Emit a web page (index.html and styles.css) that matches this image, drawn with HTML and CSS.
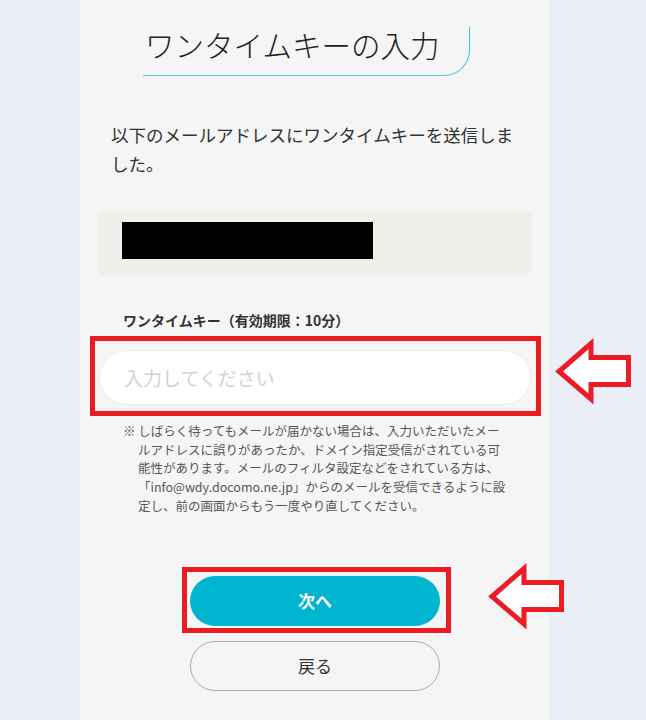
FILE: index.html
```html
<!DOCTYPE html>
<html lang="ja">
<head>
    <meta charset="UTF-8">
    <meta name="viewport" content="width=device-width, initial-scale=1.0">
    <title>ワンタイムキーの入力</title>
    <link rel="stylesheet" href="styles.css">
</head>
<body>
    <main class="panel">
        <!-- Titre -->
        <h1 class="title">ワンタイムキーの入力</h1>

        <p class="lead">以下のメールアドレスにワンタイムキーを送信しました。</p>

        <!-- Adresse masquée -->
        <div class="mail-box"><span class="mask"></span></div>

        <label class="key-label" for="key">ワンタイムキー（有効期限：10分）</label>
        <div class="field-wrap mark">
            <input type="text" id="key" class="key-input" placeholder="入力してください">
            <svg class="arrow arrow-field" width="80" height="66" viewBox="0 0 80 66">
                <polygon points="6,33.5 38,5.5 38,19.5 75.5,19.5 75.5,46.5 38,46.5 38,61" />
            </svg>
        </div>

        <p class="note">※ しばらく待ってもメールが届かない場合は、入力いただいたメールアドレスに誤りがあったか、ドメイン指定受信がされている可能性があります。メールのフィルタ設定などをされている方は、「info@wdy.docomo.ne.jp」からのメールを受信できるように設定し、前の画面からもう一度やり直してください。</p>

        <!-- Boutons -->
        <div class="actions">
            <div class="btn-wrap mark">
                <button class="btn btn-next">次へ</button>
                <svg class="arrow arrow-btn" width="80" height="66" viewBox="0 0 80 66">
                    <polygon points="6,33.5 38,5.5 38,19.5 75.5,19.5 75.5,46.5 38,46.5 38,61" />
                </svg>
            </div>
            <button class="btn btn-back">戻る</button>
        </div>
    </main>
</body>
</html>
```

FILE: styles.css
```css
body {
    margin: 0;
    background-color: #e9eef7;
    font-family: "Noto Sans CJK JP", "Noto Sans", sans-serif;
    color: #333;
}
.panel {
    box-sizing: border-box;
    width: 469px;
    min-height: 720px;
    margin-left: 80px;
    padding: 27px 17px 28px 18px;
    background-color: #f5f5f5;
    box-shadow: 0 0 3px rgba(0, 0, 0, 0.04);
}
.title {
    display: inline-block;
    margin: 0 0 0 45px;
    padding: 0 30px 14px 2px;
    font-size: 29.5px;
    font-weight: 300;
    line-height: 34px;
    color: #222;
    border-right: 1.5px solid #3cc3d8;
    border-bottom: 1.5px solid #58c9dc;
    border-bottom-right-radius: 26px;
}
.lead {
    margin: 44px 13px 0;
    font-size: 17.5px;
    line-height: 29px;
    color: #333;
}
.mail-box {
    margin-top: 31px;
    padding: 13px 24px 17px;
    background-color: #f0efeb;
    border-radius: 8px;
}
.mask {
    display: block;
    width: 251px;
    height: 37px;
    background-color: #000;
}
.key-label {
    display: block;
    margin: 34px 0 0 25px;
    font-size: 14px;
    font-weight: 700;
    line-height: 20px;
    color: #333;
}
.field-wrap {
    position: relative;
    margin: 20px 1px 0;
}
.key-input {
    box-sizing: border-box;
    display: block;
    width: 100%;
    height: 55px;
    padding: 0 24px;
    border: 1px solid #ececec;
    border-radius: 28px;
    background-color: #fff;
    font-family: inherit;
    font-size: 19px;
    color: #333;
    outline: none;
}
.key-input::placeholder {
    color: #d2d2d2;
}
.note {
    width: 368px;
    margin: 17px 0 0 40px;
    font-size: 12.5px;
    line-height: 18.7px;
    text-indent: -15px;
    color: #555;
}
.actions {
    display: flex;
    flex-direction: column;
    align-items: center;
    gap: 15px;
    margin-top: 60px;
}
.btn-wrap {
    position: relative;
}
.btn {
    display: block;
    box-sizing: border-box;
    width: 250px;
    height: 50px;
    border-radius: 25px;
    font-family: inherit;
    font-size: 17px;
    cursor: pointer;
}
.btn-next {
    background-color: #00b5cf;
    border: none;
    color: #fff;
    font-weight: 700;
}
.btn-back {
    background-color: transparent;
    border: 1px solid #aaa;
    color: #333;
}

/* annotations rouges */
.mark::before {
    content: "";
    position: absolute;
    border: 5px solid #ed1c24;
    pointer-events: none;
}
.field-wrap::before {
    top: -14px;
    left: -9px;
    right: -10px;
    bottom: -11px;
}
.btn-wrap::before {
    top: -9px;
    left: -8px;
    right: -11px;
    bottom: -7px;
}
.arrow {
    position: absolute;
    overflow: visible;
}
.arrow polygon {
    fill: #fff;
    stroke: #ed1c24;
    stroke-width: 5;
    stroke-linejoin: miter;
}
.arrow-field {
    left: 454px;
    top: -12px;
}
.arrow-btn {
    left: 296px;
    top: -13px;
}
```
